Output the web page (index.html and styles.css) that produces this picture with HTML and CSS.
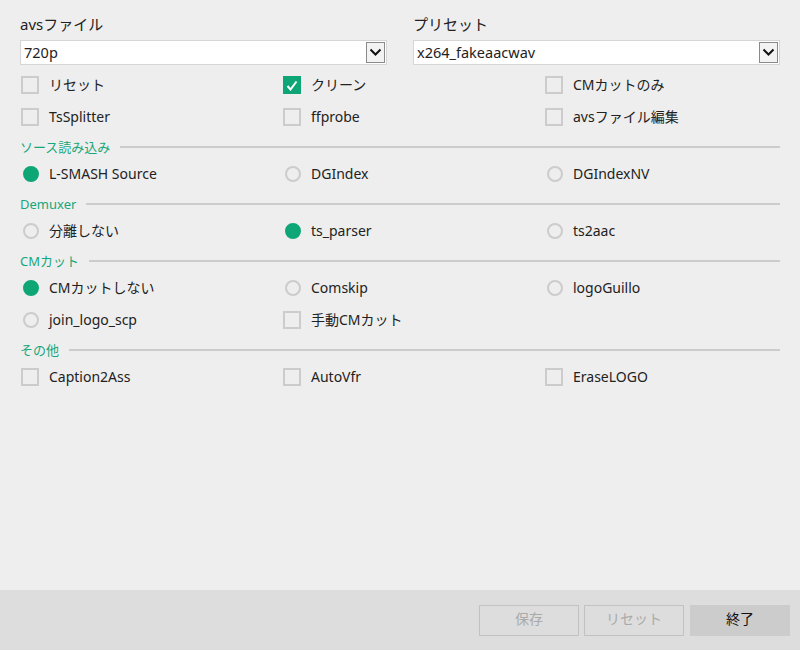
FILE: index.html
```html
<!DOCTYPE html>
<html lang="ja">
<head>
<meta charset="utf-8">
<link rel="stylesheet" href="styles.css">
</head>
<body>
<div class="app">
  <main class="content">
    <div class="presets">
      <div class="field">
        <div class="field-label">avsファイル</div>
        <div class="select"><span class="select-text">720p</span><span class="select-btn"><svg width="13" height="9" viewBox="0 0 13 9"><path d="M1.5 1.5 L6.5 6.5 L11.5 1.5" fill="none" stroke="#111" stroke-width="2"/></svg></span></div>
      </div>
      <div class="field">
        <div class="field-label">プリセット</div>
        <div class="select"><span class="select-text">x264_fakeaacwav</span><span class="select-btn"><svg width="13" height="9" viewBox="0 0 13 9"><path d="M1.5 1.5 L6.5 6.5 L11.5 1.5" fill="none" stroke="#111" stroke-width="2"/></svg></span></div>
      </div>
    </div>

    <div class="options">
      <label class="opt"><span class="ind"><span class="cb"></span></span><span>リセット</span></label>
      <label class="opt"><span class="ind"><span class="cb on"><svg width="12" height="11" viewBox="0 0 12 11"><path d="M1.5 6 L4.5 9.5 L10.5 1.5" fill="none" stroke="#fff" stroke-width="2"/></svg></span></span><span>クリーン</span></label>
      <label class="opt"><span class="ind"><span class="cb"></span></span><span>CMカットのみ</span></label>
      <label class="opt"><span class="ind"><span class="cb"></span></span><span>TsSplitter</span></label>
      <label class="opt"><span class="ind"><span class="cb"></span></span><span>ffprobe</span></label>
      <label class="opt"><span class="ind"><span class="cb"></span></span><span>avsファイル編集</span></label>
    </div>

    <div class="section"><span class="section-title">ソース読み込み</span><span class="section-line"></span></div>
    <div class="options">
      <label class="opt"><span class="ind"><span class="rb on"></span></span><span>L-SMASH Source</span></label>
      <label class="opt"><span class="ind"><span class="rb"></span></span><span>DGIndex</span></label>
      <label class="opt"><span class="ind"><span class="rb"></span></span><span>DGIndexNV</span></label>
    </div>

    <div class="section"><span class="section-title">Demuxer</span><span class="section-line"></span></div>
    <div class="options">
      <label class="opt"><span class="ind"><span class="rb"></span></span><span>分離しない</span></label>
      <label class="opt"><span class="ind"><span class="rb on"></span></span><span>ts_parser</span></label>
      <label class="opt"><span class="ind"><span class="rb"></span></span><span>ts2aac</span></label>
    </div>

    <div class="section"><span class="section-title">CMカット</span><span class="section-line"></span></div>
    <div class="options">
      <label class="opt"><span class="ind"><span class="rb on"></span></span><span>CMカットしない</span></label>
      <label class="opt"><span class="ind"><span class="rb"></span></span><span>Comskip</span></label>
      <label class="opt"><span class="ind"><span class="rb"></span></span><span>logoGuillo</span></label>
      <label class="opt"><span class="ind"><span class="rb"></span></span><span>join_logo_scp</span></label>
      <label class="opt"><span class="ind"><span class="cb"></span></span><span>手動CMカット</span></label>
    </div>

    <div class="section"><span class="section-title">その他</span><span class="section-line"></span></div>
    <div class="options">
      <label class="opt"><span class="ind"><span class="cb"></span></span><span>Caption2Ass</span></label>
      <label class="opt"><span class="ind"><span class="cb"></span></span><span>AutoVfr</span></label>
      <label class="opt"><span class="ind"><span class="cb"></span></span><span>EraseLOGO</span></label>
    </div>
  </main>
  <footer class="footer">
    <button class="btn" disabled>保存</button>
    <button class="btn" disabled>リセット</button>
    <button class="btn primary">終了</button>
  </footer>
</div>
</body>
</html>
```

FILE: styles.css
```css
* { box-sizing: border-box; }
html, body { margin: 0; padding: 0; }
body {
  background: #eeeeee;
  font-family: "Noto Sans", "Noto Sans CJK JP", sans-serif;
  font-size: 14px;
  color: #222;
}
.app {
  width: 800px;
  height: 650px;
  display: flex;
  flex-direction: column;
}
.content {
  flex: 1;
  padding: 13px 20px 0 20px;
}
.presets {
  display: grid;
  grid-template-columns: 367px 367px;
  column-gap: 26px;
}
.field-label {
  height: 22px;
  line-height: 22px;
  font-size: 15px;
  margin-bottom: 5px;
}
.select {
  height: 25px;
  background: #fff;
  border: 1px solid #d6d6d6;
  display: flex;
  align-items: center;
  justify-content: space-between;
  padding: 1px;
}
.select-text {
  font-size: 14.5px;
  line-height: 21px;
  padding-left: 2px;
}
.select-btn {
  width: 19px;
  height: 21px;
  border: 1px solid #8a8a8a;
  background: #f3f3f3;
  display: flex;
  align-items: center;
  justify-content: center;
}
.presets + .options { margin-top: 4px; }
.options {
  display: grid;
  grid-template-columns: 262px 262px 1fr;
}
.opt {
  height: 32px;
  display: flex;
  align-items: center;
  gap: 9px;
  font-size: 14px;
  line-height: 18px;
  white-space: nowrap;
}
.ind {
  width: 20px;
  height: 20px;
  display: flex;
  align-items: center;
  justify-content: center;
}
.cb {
  width: 18px;
  height: 18px;
  border: 2px solid #cccccc;
  display: flex;
  align-items: center;
  justify-content: center;
}
.cb.on {
  background: #0ea676;
  border-color: #0ea676;
}
.rb {
  width: 16px;
  height: 16px;
  border-radius: 50%;
  border: 2px solid #cccccc;
  margin-left: 2px;
}
.rb.on {
  background: #0ea676;
  border-color: #0ea676;
}
.section {
  height: 25px;
  padding-top: 3px;
  display: flex;
  align-items: center;
  gap: 10px;
}
.section-title {
  color: #17a77a;
  font-size: 13px;
  line-height: 16px;
}
.section-line {
  flex: 1;
  height: 2px;
  background: #cccccc;
}
.footer {
  height: 60px;
  background: #dddddd;
  display: flex;
  justify-content: flex-end;
  align-items: flex-start;
  gap: 5px;
  padding: 15px 10px 0 0;
}
.btn {
  width: 100px;
  height: 31px;
  font-family: "Noto Sans", "Noto Sans CJK JP", sans-serif;
  font-size: 14px;
  line-height: 25px;
  background: transparent;
  border: 1px solid #c2c2c2;
  color: #aaaaaa;
  padding: 0 0 4px 0;
}
.btn.primary {
  background: #cccccc;
  border-color: #cccccc;
  color: #111;
  margin-left: 1px;
}
```
